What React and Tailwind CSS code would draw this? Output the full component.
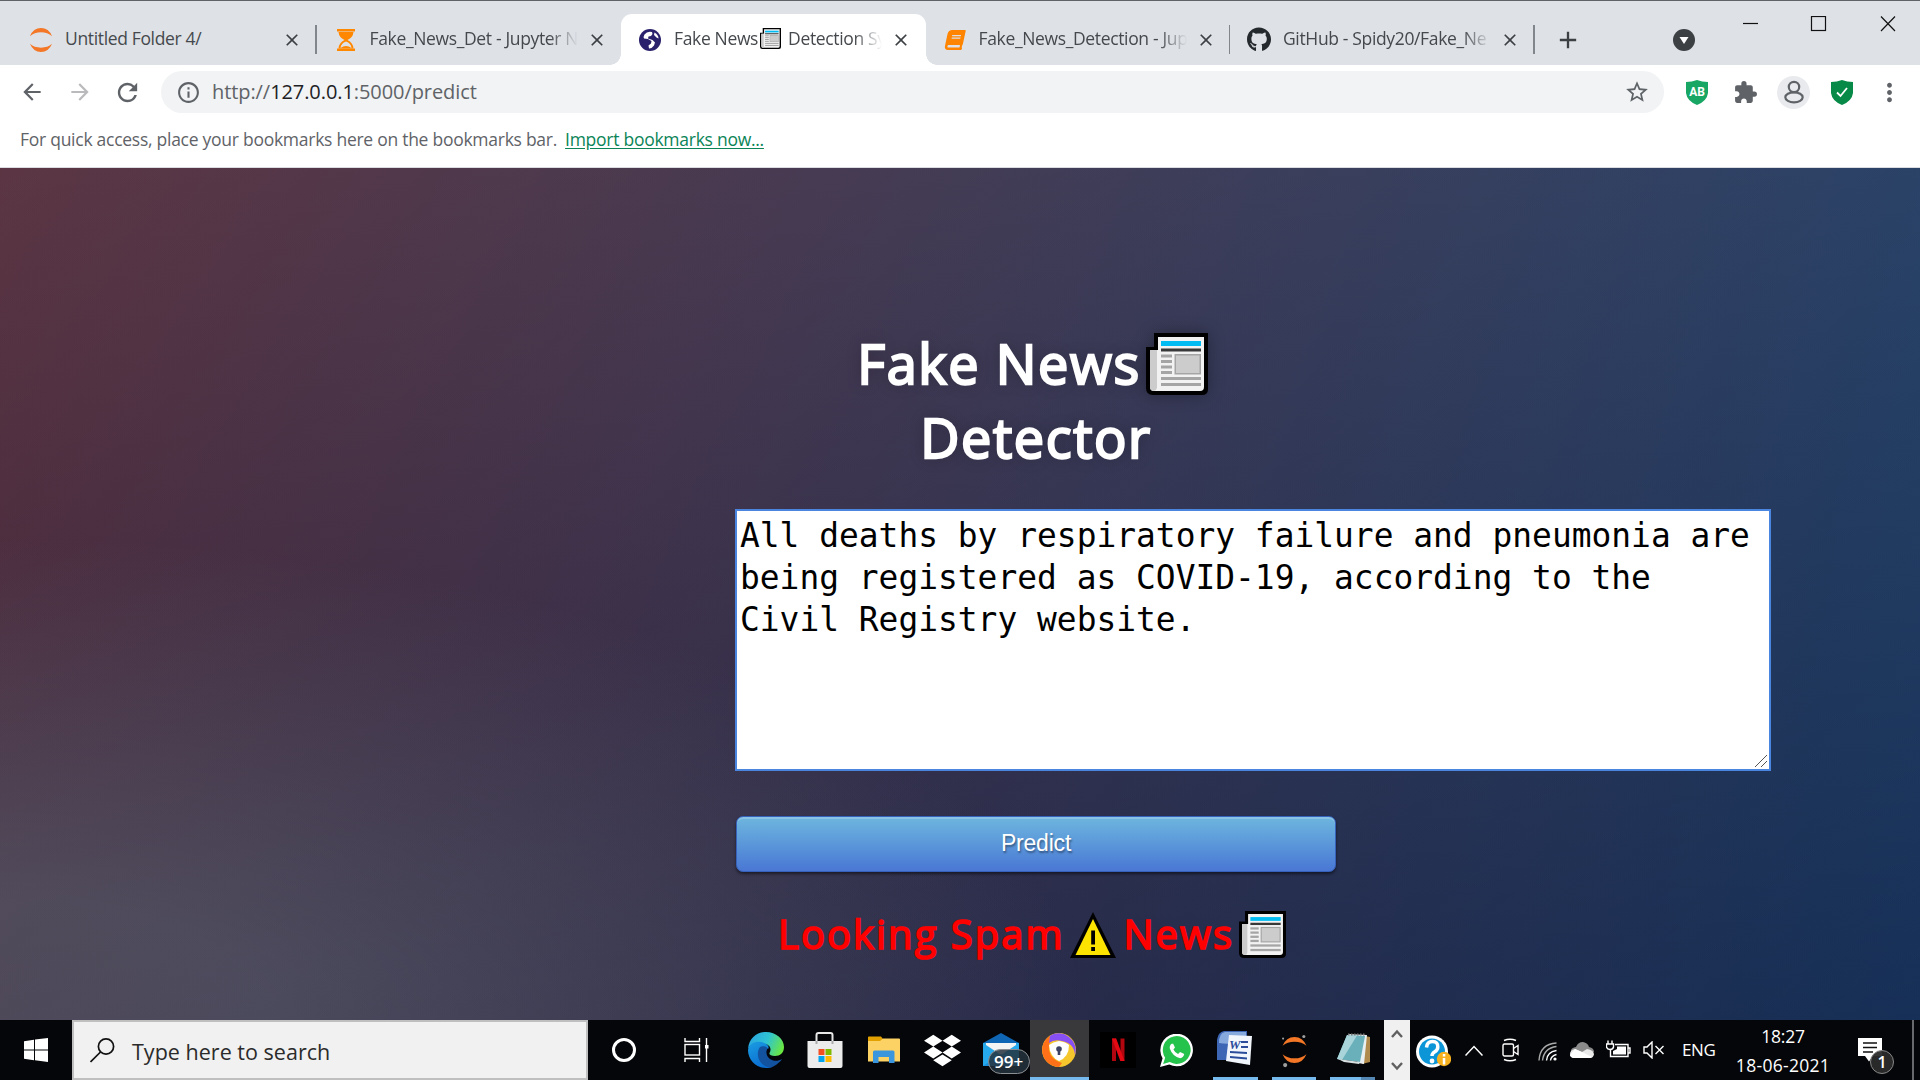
import React from "react";
import { MdArrowBack, MdArrowForward, MdRefresh, MdExtension, MdInfoOutline, MdStarBorder, MdMoreVert, MdClose, MdAdd } from "react-icons/md";
import { FaGithub, FaBook, FaDropbox } from "react-icons/fa";

function Newspaper({ className }) {
  return (
    <svg viewBox="0 0 62 62" className={className}>
      <path d="M8 0H62V56Q62 62 56 62H7Q0 62 0 55V14H8Z" fill="#000" />
      <path d="M12 4H58V54Q58 58 54 58H8Q4 58 4 54V17H12Z" fill="#f2f2f2" />
      <path d="M4 17H11V55Q10 58 8 58Q4 58 4 54Z" fill="#ccc" />
      <rect x="15" y="8" width="40" height="5" fill="#00bcf2" />
      <rect x="15" y="15.500" width="40" height="3" fill="#383838" />
      <g fill="#a5a5a5">
        <rect x="15" y="21.500" width="11" height="3" />
        <rect x="15" y="27" width="11" height="3" />
        <rect x="15" y="32.500" width="11" height="3" />
        <rect x="15" y="38" width="11" height="3" />
        <rect x="15" y="44" width="40" height="3" />
        <rect x="15" y="50" width="40" height="3" />
        <rect x="28.500" y="21" width="26.500" height="20.500" />
      </g>
      <rect x="30" y="22.500" width="23.500" height="17.500" fill="#ccc" />
    </svg>
  );
}

function Warning({ className }) {
  return (
    <svg viewBox="0 0 46 46" className={className}>
      <path d="M23 0L46 46H0Z" fill="#000" />
      <path d="M23 7L40.500 43H5.500Z" fill="#fde300" />
      <path d="M21.200 18.500h3.800v14h-3.800zM21.200 35h3.800v4h-3.800z" fill="#000" />
    </svg>
  );
}

function Jupyter({ className, moons }) {
  return (
    <svg viewBox="0 0 24 26" className={className}>
      <path d="M0.500 9.500Q4 1 12 1T23.500 9.500Q19 5.500 12 5.500T0.500 9.500Z" fill="#f37726" />
      <path d="M0.500 17.500Q4 26 12 26T23.500 17.500Q19 21.500 12 21.500T0.500 17.500Z" fill="#f37726" />
      {moons && (
        <g fill="#9e9e9e">
          <circle cx="21" cy="0.500" r="1.500" />
          <circle cx="3" cy="28" r="2" />
          <circle cx="1" cy="2.500" r="1" />
        </g>
      )}
    </svg>
  );
}

function Hourglass() {
  return (
    <svg viewBox="0 0 18 22" className="h-[22px] w-[18px]">
      <path d="M0 0H18V2.500H0ZM0 19.500H18V22H0Z" fill="#ff8800" />
      <path d="M1.500 3H16.500Q16 8.500 10.500 11Q16 13.500 16.500 19.500H1.500Q2 13.500 7.500 11Q2 8.500 1.500 3Z" fill="#ff8800" />
      <path d="M3.500 19Q4 14 9 12.500Q14 14 14.500 19Q9 15 3.500 19Z" fill="#dee1e6" />
    </svg>
  );
}

function Globe() {
  return (
    <svg viewBox="0 0 22 22" className="size-[22px]">
      <circle cx="11" cy="11" r="11" fill="#29216b" />
      <path d="M13 3Q8 2 5.500 5.500Q4 8 5 9.500L9 10L12.500 12L12 14.500L9.500 16.500L10 19.500Q13 19.500 15 16.500L16 13.500L13.500 11L9 9.500L9.500 7.500L12 7L13.500 5Z" fill="#fff" />
      <path d="M15.500 3.500L15 6L17.500 8.500L19.500 9.500Q19.500 6 15.500 3.500Z" fill="#fff" />
    </svg>
  );
}

function Tab({ icon, children, active, separator, fade }) {
  return (
    <div className={"relative flex h-[51px] w-[304.500px] shrink-0 items-center pl-[17px] pr-[12px] " + (active ? "rounded-t-[11px] bg-white" : "")}>
      {active && (
        <>
          <span className="absolute -left-[11px] bottom-0 size-[11px] bg-[radial-gradient(circle_at_0_0,transparent_10.500px,white_11px)]" />
          <span className="absolute -right-[11px] bottom-0 size-[11px] bg-[radial-gradient(circle_at_100%_0,transparent_10.500px,white_11px)]" />
        </>
      )}
      <span className="flex w-[24px] shrink-0 justify-center">{icon}</span>
      <span className={"mb-[2px] ml-[12px] flex w-[214px] shrink-0 items-center whitespace-nowrap text-[17.500px] tracking-[-0.350px] text-[#45494d] " + (fade ? "[mask-image:linear-gradient(to_right,black_180px,transparent_208px)]" : "tracking-[-0.150px]")}>
        {children}
      </span>
      <MdClose className="ml-[3px] size-[20px] shrink-0 text-[#3c4043]" />
      {separator && <span className="absolute right-0 top-[11px] h-[29px] w-[1.500px] bg-[#80868b]" />}
    </div>
  );
}

function Shield({ children, color }) {
  return (
    <svg viewBox="0 0 22 25" className="h-[25px] w-[22px]">
      <path d="M11 0Q16 2 22 2V13Q21 21 11 25Q1 21 0 13V2Q6 2 11 0Z" fill={color} />
      {children}
    </svg>
  );
}

function BrowserTop() {
  return (
    <header className="h-[168px] border-b border-[#dadce0] bg-white">
      <div className="flex h-[65px] items-end border-t border-[#5f6368] bg-[#dee1e6] pl-[12px]">
        <Tab separator icon={<Jupyter className="h-[25px] w-[24px]" />}>Untitled Folder 4/</Tab>
        <Tab fade icon={<Hourglass />}>Fake_News_Det - Jupyter N</Tab>
        <Tab fade active icon={<Globe />}>
          <span>Fake News</span>
          <Newspaper className="mx-[2px] size-[21px] shrink-0" />
          <span className="ml-[5px]">Detection Sy</span>
        </Tab>
        <Tab fade separator icon={<FaBook className="size-[20px] -skew-x-12 text-[#ff8400]" />}>Fake_News_Detection - Jup</Tab>
        <Tab fade separator icon={<FaGithub className="size-[25px] text-[#24292e]" />}>GitHub - Spidy20/Fake_Ne</Tab>
        <div className="flex h-[51px] flex-1 items-center pl-[19px]">
          <MdAdd className="size-[28px] text-[#3c4043]" />
          <svg viewBox="0 0 22 22" className="ml-[91px] size-[22px]">
            <circle cx="11" cy="11" r="11" fill="#3c4043" />
            <path d="M6.500 8H15.500L11 15Z" fill="#fff" />
          </svg>
          <svg viewBox="0 0 153 16" className="mb-[31px] ml-[48px] h-[16px] w-[153px]" fill="none" stroke="#111" strokeWidth="1.200">
            <path d="M0 7.500H15" />
            <rect x="68.500" y="0.500" width="14" height="14" />
            <path d="M138 0.500L152 15M152 0.500L138 15" />
          </svg>
        </div>
      </div>
      <div className="flex h-[54px] items-center pl-[19px] text-[#5f6368]">
        <MdArrowBack className="size-[26px]" />
        <MdArrowForward className="ml-[22px] size-[26px] text-[#bababc]" />
        <MdRefresh className="ml-[20px] size-[29px]" />
        <div className="ml-[19px] flex h-[42px] w-[1503px] items-center rounded-full bg-[#f1f3f4] pl-[15px] pr-[14px]">
          <MdInfoOutline className="size-[25px]" />
          <span className="ml-[11px] flex-1 whitespace-nowrap text-[20px] tracking-[-0.080px]">
            http://<span className="text-[#202124]">127.0.0.1</span>:5000/predict
          </span>
          <MdStarBorder className="size-[26px]" />
        </div>
        <div className="ml-[22px] flex flex-1 items-center">
          <Shield color="#17a663">
            <text x="11" y="16" textAnchor="middle" fontSize="12" fontWeight="700" fill="#fff" fontFamily="Roboto, sans-serif">AB</text>
          </Shield>
          <MdExtension className="ml-[25px] size-[25px]" />
          <span className="ml-[19px] flex size-[33px] items-center justify-center rounded-full bg-[#e8eaed]">
            <svg viewBox="0 0 22 24" className="h-[24px] w-[22px]" fill="none" stroke="#5f6368" strokeWidth="2.200">
              <circle cx="11" cy="7" r="5.200" />
              <ellipse cx="11" cy="17.300" rx="8.700" ry="5" />
            </svg>
          </span>
          <span className="ml-[21px]">
            <Shield color="#078a47">
              <path d="M6 12.500L9.500 16L16 8" fill="none" stroke="#fff" strokeWidth="1.800" />
            </Shield>
          </span>
          <MdMoreVert className="ml-[22px] size-[29px]" />
        </div>
      </div>
      <div className="flex h-[40px] items-center whitespace-nowrap pl-[20px] text-[17.500px] tracking-[-0.265px] text-[#5f6368]">
        <span>For quick access, place your bookmarks here on the bookmarks bar.</span>
        <a className="ml-[8px] text-[#0b8457] underline underline-offset-2">Import bookmarks now...</a>
      </div>
    </header>
  );
}

function Page() {
  return (
    <main className="flex h-[852px] flex-col bg-[radial-gradient(ellipse_farthest-corner_at_0%_100%,rgba(104,128,138,.4)_10%,rgba(138,114,76,0)_40%),linear-gradient(to_bottom,rgba(57,173,219,.25)_0%,rgba(42,60,87,.4)_100%),linear-gradient(135deg,#670d10_0%,#092756_100%)] pl-[735px] pt-[156px]">
      <h1 className="flex w-[600px] flex-col items-center text-[54px] leading-[74px] tracking-[1.600px] text-white [-webkit-text-stroke:2.300px_white] [text-shadow:0_0_15px_rgba(0,0,0,.3)]">
        <span className="flex items-center pr-[5px] pt-[2px]">
          Fake News
          <Newspaper className="ml-[5px] mt-[1px] size-[62px] drop-shadow-[0_0_8px_rgba(0,0,0,.3)]" />
        </span>
        <span className="pl-[2px]">Detector</span>
      </h1>
      <div className="relative mt-[35px] h-[262px] w-[1036px] border-2 border-[#4a86e0] bg-white pl-[3px] pt-[4px]">
        <p className="whitespace-pre font-['DejaVu_Sans_Mono',monospace] text-[32.900px] leading-[42px] text-black">
          {"All deaths by respiratory failure and pneumonia are\nbeing registered as COVID-19, according to the\nCivil Registry website."}
        </p>
        <svg viewBox="0 0 14 14" className="absolute bottom-[1px] right-[1px] size-[14px]" stroke="#555" strokeWidth="1">
          <path d="M1 13L13 1M7 13L13 7" />
        </svg>
      </div>
      <button className="ml-[1px] mt-[45px] h-[56px] w-[600px] rounded-[7px] border border-[#3762bc] bg-linear-to-b from-[#6eb6de] to-[#4a77d4] pb-[1px] font-['Liberation_Sans',Arial,sans-serif] text-[23px] tracking-[-0.200px] text-white shadow-[inset_0_2px_0_rgba(255,255,255,.2),0_2px_3px_rgba(0,0,0,.5)] [text-shadow:1px_2px_2px_rgba(0,0,0,.4)]">
        Predict
      </button>
      <div className="mt-[33px] flex h-[58px] w-[600px] items-center whitespace-pre pl-[43px] text-[40px] tracking-[2px] text-red-600 [-webkit-text-stroke:1.700px_#f00] [-webkit-text-fill-color:#f00]">
        Looking Spam
        <Warning className="ml-[6px] mt-[1px] size-[46px]" />
        <span className="ml-[7px]">News</span>
        <Newspaper className="ml-[5px] size-[47px]" />
      </div>
    </main>
  );
}

function AppCell({ children, bar, active, split }) {
  return (
    <div className={"relative flex h-[60px] items-center justify-center " + (active ? "bg-[#39393c]" : "")}>
      {children}
      {bar && <span className={"absolute bottom-0 h-[3px] bg-[#76b9ed] " + (active ? "inset-x-0" : "inset-x-[7px]")} />}
      {split && <span className="absolute bottom-0 right-[7px] h-[3px] w-[14px] bg-[#5587b5]" />}
    </div>
  );
}

function TaskApps() {
  return (
    <div className="ml-[5px] grid h-[60px] w-[645px] grid-cols-11">
      <AppCell>
        <svg viewBox="0 0 36 36" className="size-[36px]">
          <defs>
            <linearGradient id="edgeTop" x1="0" y1="0.300" x2="1" y2="0.600">
              <stop offset="0" stopColor="#2aa5e0" />
              <stop offset="0.500" stopColor="#2fc3d3" />
              <stop offset="1" stopColor="#6be83f" />
            </linearGradient>
            <linearGradient id="edgeLow" x1="0" y1="0" x2="0.500" y2="1">
              <stop offset="0" stopColor="#1b9de2" />
              <stop offset="1" stopColor="#0a6cd0" />
            </linearGradient>
          </defs>
          <path d="M0 17C1 6 9 0 18 0C28 0 36 7 36 15C36 21 32 24 27 24C23 24 21 22.500 21.500 21C23.500 18 23 13 17 12C9 10 2 12 0 17Z" fill="url(#edgeTop)" />
          <path d="M0 18C1 11 8 9 13 10C19 11 22 15 20 17C17 14 13 17 13 22C13 30 22 36 26 34C23 36 20 36 18 36C8 36 0 28 0 18Z" fill="url(#edgeLow)" />
          <path d="M12 15C7 22 11 34 22 35.500C28 34 32 30 34 27C28 31 19 28 18.500 21C18 18 20 17 19 15.500C17 13.500 13.500 14 12 15Z" fill="#12529f" />
        </svg>
      </AppCell>
      <AppCell>
        <svg viewBox="0 0 36 36" className="size-[36px]">
          <path d="M9.500 12V3Q9.500 1 11.500 1H23.500Q25.500 1 25.500 3V12" fill="none" stroke="#e8e8e8" strokeWidth="2" />
          <path d="M0.500 9H35.500V34Q35.500 36 33.500 36H2.500Q0.500 36 0.500 34Z" fill="#ececec" />
          <path d="M9.500 9V12M25.500 9V12" stroke="#aaa" strokeWidth="2" />
          <path d="M11.500 17h6v6h-6z" fill="#f25022" />
          <path d="M18.500 17h6v6h-6z" fill="#7fba00" />
          <path d="M11.500 24h6v6h-6z" fill="#00a4ef" />
          <path d="M18.500 24h6v6h-6z" fill="#ffb900" />
        </svg>
      </AppCell>
      <AppCell>
        <svg viewBox="0 0 32 28" className="h-[28px] w-[32px]">
          <path d="M0 1Q0 0.500 1 0.500H13L15 3V8H0Z" fill="#e2a100" />
          <path d="M0 5H12L15 2.500H31Q32 2.500 32 3.500V25.500H0Z" fill="#fdd265" />
          <path d="M5 27V16Q5 14.500 6.500 14.500H25Q26.500 14.500 26.500 16V27H21V21H10.500V27Z" fill="#3c96dd" />
        </svg>
      </AppCell>
      <AppCell><FaDropbox className="size-[37px] text-white" /></AppCell>
      <AppCell>
        <svg viewBox="0 0 36 34" className="h-[34px] w-[36px]">
          <path d="M0 10L18 0L36 10V20H0Z" fill="#0f66b5" />
          <path d="M0 10H36V33H0Z" fill="#25a9ec" />
          <path d="M3 10H33V12L18 22L3 12Z" fill="#f4f4f4" />
          <path d="M0 33L18 21L36 33Z" fill="#1b8fdb" />
        </svg>
        <span className="absolute left-[16px] top-[29px] flex h-[25px] w-[42px] items-center justify-center rounded-full border border-[#8b8f93] bg-[#25333d]/85 text-[17px] font-semibold text-white">99+</span>
      </AppCell>
      <AppCell active bar>
        <svg viewBox="0 0 34 34" className="size-[34px]">
          <circle cx="17" cy="17" r="17" fill="#f5c72d" />
          <path d="M8 2.700A17 17 0 0 0 17 34L20 30Q9 27 7 17Z" fill="#ff7118" />
          <path d="M8 2.700A17 17 0 0 1 33 22Q32 10 20 8Q12 6 7 10Z" fill="#8650f5" />
          <path d="M17 8Q24 9 27 12Q27 24 17 28Q8 24 7 12Q11 9 17 8Z" fill="#fff" />
          <circle cx="17" cy="16" r="2.800" fill="#3b4163" />
          <path d="M15.700 17h2.600v5h-2.600z" fill="#3b4163" />
        </svg>
      </AppCell>
      <AppCell>
        <svg viewBox="0 0 36 36" className="size-[36px]">
          <path d="M0 0h36v36H0z" fill="#000" />
          <path d="M12 6.500h4v22.500h-4zM20.500 6.500h4v22.500h-4z" fill="#b1060f" />
          <path d="M12 6.500h4.200L24.500 29h-4.200z" fill="#e50914" />
        </svg>
      </AppCell>
      <AppCell>
        <svg viewBox="0 0 32 32" className="size-[33px]">
          <path d="M0 32L2.500 23.500A15.800 15.800 0 1 1 9 29.600Z" fill="#fff" />
          <path d="M3 29L5 23A13.500 13.500 0 1 1 9.500 27.200Z" fill="#25c24c" />
          <path d="M11.500 9.500Q9 11 9.500 14Q12 21.500 19.500 23.500Q23 23 23.500 19.500L19.500 17.500L17.500 19.500Q14.500 18 13 15L14.500 13L12.800 9.500Z" fill="#fff" />
        </svg>
      </AppCell>
      <AppCell bar>
        <svg viewBox="0 0 36 34" className="mb-[4px] h-[34px] w-[36px]">
          <path d="M7 0H30V29H0V9Q1 1 7 0Z" fill="#3d66b5" />
          <path d="M8 1H29V10Q14 14 2 12Q2 2 8 1Z" fill="#86aadd" />
          <path d="M12 4L35 5L33 34L9 30Z" fill="#f1f5fc" />
          <path d="M24 10h7v2h-7zM24 15h7v2h-7zM13 20l17 1v2l-17-1zM13 25l17 1.500v2l-17-1.500z" fill="#2a4c9b" />
          <text x="12" y="18" fontSize="13" fontWeight="700" fontStyle="italic" fill="#2a4c9b" fontFamily="Liberation Serif, serif">W</text>
        </svg>
      </AppCell>
      <AppCell bar><Jupyter moons className="mb-[2px] h-[27px] w-[25px] overflow-visible" /></AppCell>
      <AppCell bar split>
        <svg viewBox="0 0 34 32" className="mb-[2px] h-[32px] w-[34px]">
          <path d="M29 3L34 4V29L26 31Z" fill="#b08a4c" />
          <path d="M12 1L31 2L28 31L22 30Z" fill="#e9eff1" />
          <path d="M11 2L29 3L24 29L1 26Z" fill="#69b0bb" />
          <path d="M11 2L21 2.500L6 27L1 26Z" fill="#a9d4da" />
          <path d="M2 26L24 29L23 31L8 29Z" fill="#d8dfe0" />
          <path d="M12 1.500H30" stroke="#777" strokeWidth="2" strokeDasharray="1.500 1.500" />
        </svg>
      </AppCell>
    </div>
  );
}

function Tray() {
  return (
    <div className="flex h-[60px] flex-1 items-center text-white">
      <div className="ml-[2px] flex h-[60px] w-[26px] flex-col items-center justify-between bg-[#f0f0f0] py-[9px]">
        <svg viewBox="0 0 12 9" className="h-[9px] w-[12px]" fill="none" stroke="#606060" strokeWidth="2.400"><path d="M1 8L6 2.500L11 8" /></svg>
        <svg viewBox="0 0 12 9" className="h-[9px] w-[12px]" fill="none" stroke="#606060" strokeWidth="2.400"><path d="M1 1L6 6.500L11 1" /></svg>
      </div>
      <svg viewBox="0 0 35 34" className="ml-[6px] mt-[3px] h-[34px] w-[35px]">
        <circle cx="16" cy="16.500" r="16" fill="#fff" />
        <circle cx="16" cy="16.500" r="13" fill="#0c96d8" />
        <path d="M10.500 12.500Q11 6.500 16.500 6.500T21.800 12Q21.800 15 18.500 17Q16 18.500 16 21" fill="none" stroke="#fff" strokeWidth="3.500" />
        <circle cx="16" cy="26" r="2.400" fill="#fff" />
        <circle cx="28" cy="24" r="7.200" fill="#f8b11e" />
        <path d="M26.800 19h2.500v2.500h-2.500zM26.800 23h2.500v6.500h-2.500z" fill="#fff" />
      </svg>
      <svg viewBox="0 0 18 11" className="ml-[14px] h-[11px] w-[18px]" fill="none" stroke="#fff" strokeWidth="1.500"><path d="M0.500 10.500L9 1.500L17.500 10.500" /></svg>
      <svg viewBox="0 0 18 24" className="ml-[19px] h-[24px] w-[18px]" fill="none" stroke="#fff" strokeWidth="1.400">
        <rect x="1" y="6" width="10.500" height="12" rx="1.500" />
        <path d="M11.500 10.500L16 7.500V16.500L11.500 13.500M2 2.500Q8 0 14 2.500M2 21.500Q8 24 14 21.500" />
      </svg>
      <svg viewBox="0 0 19 19" className="ml-[18px] mt-[3px] size-[19px]" fill="none" stroke="#fff" strokeWidth="1.400">
        <path d="M12.500 18.500Q13 14 18.500 12.500" />
        <path d="M8.500 18.500Q9 10 18.500 8.500" />
        <path d="M4.500 18.500Q6 6 18.500 4.500M1 18.500Q2 2 18.500 1" stroke="#aaa" />
        <circle cx="17" cy="17" r="1.600" fill="#fff" stroke="none" />
      </svg>
      <svg viewBox="0 0 24 16" className="ml-[13px] h-[16px] w-[24px]">
        <path d="M4 12Q-1 10 2 6.500Q4 5 6 5Q8 0 13 0Q18 1 19 5Q24 6 24 10Z" fill="#8b8b8b" />
        <path d="M3 16Q0 15 0 12Q0 8 5 7L12 10L17 7Q24 8 24 12.500Q23 16 20 16Z" fill="#e9e9e9" />
        <path d="M5 7L12 10L22 15Q21 16 20 16H4Q0 15 0 13Z" fill="#fff" />
      </svg>
      <svg viewBox="0 0 25 18" className="ml-[12px] mb-[2px] h-[18px] w-[25px]" fill="none" stroke="#fff" strokeWidth="1.400">
        <path d="M9 4.500H22V16.500H4.500V10M22.500 8H24V13H22.500" />
        <path d="M11 6.500H20V14.500H7V11L11 9Z" fill="#fff" stroke="none" />
        <path d="M0.500 4H7.500V7Q7 9.500 4 9.500T0.500 7ZM2 4V0.500M6 4V0.500" />
      </svg>
      <svg viewBox="0 0 22 18" className="ml-[12px] h-[18px] w-[22px]" fill="none" stroke="#fff" strokeWidth="1.400">
        <path d="M1 6H4L9 1V17L4 12H1ZM12.500 5L20.500 13M20.500 5L12.500 13" />
      </svg>
      <span className="ml-[17px] w-[36px] whitespace-nowrap text-[17px] tracking-[-0.400px]">ENG</span>
      <div className="ml-[15px] flex h-[60px] w-[100px] flex-col items-center justify-between whitespace-nowrap pb-[2px] pt-[3px] text-[17.500px] leading-[26px] tracking-[-0.200px]">
        <span>18:27</span>
        <span className="tracking-[0.300px]">18-06-2021</span>
      </div>
      <div className="relative ml-[25px] size-[36px]">
        <svg viewBox="0 0 24 24" className="absolute left-0 top-[6px] size-[24px]">
          <path d="M0 0H24V18H15L11 23.500L7 18H0Z" fill="#fff" />
          <path d="M5 5H19M5 9.500H19M5 14H15" stroke="#111" strokeWidth="1.300" />
        </svg>
        <span className="absolute left-[12px] top-[18px] flex size-[24px] items-center justify-center rounded-full border border-[#888] bg-[#2b2b2b]/95 text-[16px] font-semibold">1</span>
      </div>
      <span className="ml-auto mr-[6px] h-full w-[2px] bg-[#68696c]" />
    </div>
  );
}

function Taskbar() {
  return (
    <footer className="flex h-[60px] bg-[#050609]">
      <div className="flex w-[72px] items-center justify-center">
        <svg viewBox="0 0 24 24" className="size-[24px]" fill="#fff">
          <path d="M0 3.300L10 1.800V11.400H0ZM11 1.600L24 0V11.400H11ZM0 12.500H10V22.200L0 20.700ZM11 12.500H24V24L11 22.300Z" />
        </svg>
      </div>
      <div className="flex w-[516px] items-center border-2 border-[#bfbfbf] bg-[#f1f1f1] pl-[16px]">
        <svg viewBox="0 0 25 25" className="size-[25px]" fill="none" stroke="#111" strokeWidth="1.700">
          <circle cx="16" cy="8.500" r="7.600" />
          <path d="M10.500 14L0.500 24" />
        </svg>
        <span className="ml-[17px] mt-[4px] whitespace-nowrap text-[21.500px] tracking-[0.020px] text-[#2b2b2b]">Type here to search</span>
      </div>
      <div className="flex w-[72px] items-center justify-center">
        <span className="size-[24px] rounded-full border-[3px] border-white" />
      </div>
      <div className="flex w-[72px] items-center justify-center">
        <svg viewBox="0 0 25 24" className="h-[24px] w-[25px]" fill="none" stroke="#fff" strokeWidth="1.400">
          <rect x="1" y="6.500" width="14.500" height="10.500" />
          <path d="M1 0V3.500H15.500V0M1 24V20.500H15.500V24M22.500 0V24" />
          <path d="M21 7h3.500v3.500H21z" fill="#fff" stroke="none" />
        </svg>
      </div>
      <TaskApps />
      <Tray />
    </footer>
  );
}

export default function App() {
  return (
    <div className="h-[1080px] w-[1920px] overflow-hidden font-['Open_Sans','Noto_Sans',sans-serif]">
      <BrowserTop />
      <Page />
      <Taskbar />
    </div>
  );
}
